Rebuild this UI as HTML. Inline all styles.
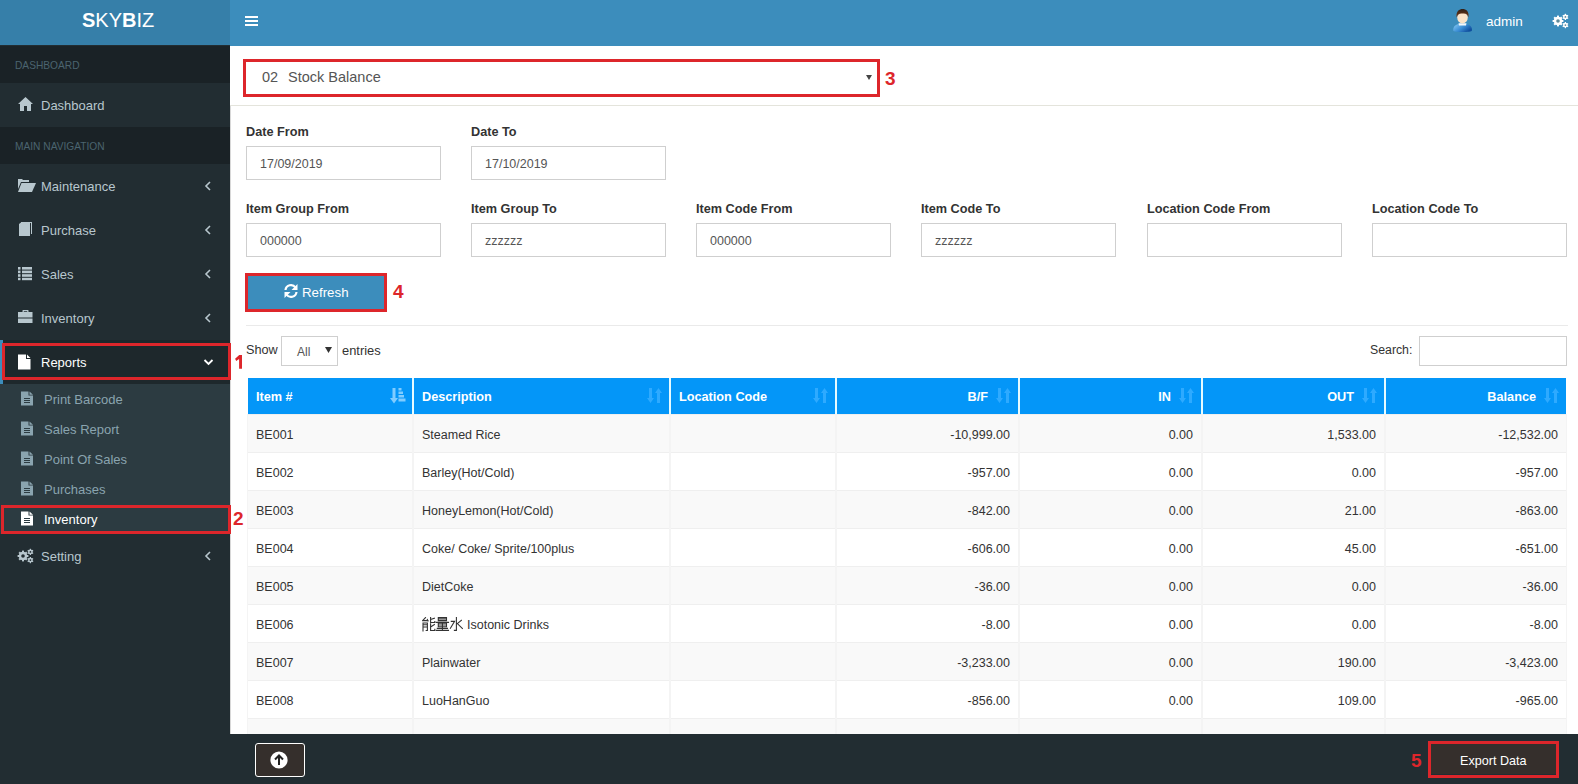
<!DOCTYPE html>
<html><head><meta charset="utf-8"><style>
*{box-sizing:border-box;margin:0;padding:0}
html,body{width:1578px;height:784px;overflow:hidden;background:#fff;font-family:"Liberation Sans",sans-serif;}
div,span,svg{position:absolute}
.t{white-space:nowrap}
.red{border:3px solid #dd262b}
.num{color:#dd262b;font-weight:bold;font-size:19px;line-height:19px}
.lbl{font-size:12.7px;font-weight:bold;color:#333;line-height:15px;margin-top:1px}
.inp{width:195px;height:34px;border:1px solid #cfcfcf;background:#fff}
.inp span{left:13px;top:10px;font-size:12.5px;color:#555;line-height:15px}
.mt{left:41px;font-size:13px;color:#b8c7ce;line-height:15px;margin-top:1px}
.st{left:44px;font-size:13px;color:#8aa4af;line-height:15px}
.cell{font-size:12.5px;color:#333;line-height:15px}
.th{font-size:12.7px;color:#fff;font-weight:bold;line-height:15px}
</style></head><body>
<div style="left:0;top:0;width:230px;height:46px;background:#367fa9"></div>
<div class="t" style="left:82px;top:9px;font-size:20px;color:#fff;line-height:23px;letter-spacing:0px"><b>S</b>KY<b>B</b>IZ</div>
<div style="left:230px;top:0;width:1348px;height:46px;background:#3c8dbc"></div>
<div style="left:245px;top:16px;width:13px;height:2px;background:#fff"></div>
<div style="left:245px;top:20px;width:13px;height:2px;background:#fff"></div>
<div style="left:245px;top:24px;width:13px;height:2px;background:#fff"></div>
<svg style="left:1452px;top:8px" width="21" height="25" viewBox="0 0 21 25">
<defs><linearGradient id="bd" x1="0" y1="0" x2="1" y2="0.6"><stop offset="0" stop-color="#8fd0f5"/><stop offset="0.55" stop-color="#3d8fd6"/><stop offset="1" stop-color="#0f4f9e"/></linearGradient>
<linearGradient id="hr" x1="0" y1="0" x2="0" y2="1"><stop offset="0" stop-color="#2e2018"/><stop offset="1" stop-color="#7a3a14"/></linearGradient></defs>
<path d="M1.2 22.5 C1.2 17.5 4.5 15.5 10.5 15.5 C16.5 15.5 20 17.5 20 22.5 C20 24.5 1.2 24.5 1.2 22.5Z" fill="url(#bd)"/>
<path d="M6.5 15.3 L14.5 15.3 L14 17.6 L7 17.6Z" fill="#f4f8fb"/>
<ellipse cx="10.5" cy="9.6" rx="5.3" ry="5.9" fill="#fbe3c8"/>
<path d="M4.6 9.5 C3.8 3 7.5 1 10.5 1 C14 1 17.3 3 16.5 9.5 C15.8 6.5 14 5.2 10.5 5.6 C7.5 5.2 5.5 6.5 4.6 9.5Z" fill="url(#hr)"/>
</svg>
<div class="t" style="left:1486px;top:14px;font-size:13.5px;color:#fff;line-height:16px">admin</div>
<svg style="left:1552px;top:13px" width="17" height="16" viewBox="0 0 17 16"><circle cx="6" cy="8" r="4.2" fill="#fff"/><rect x="5.00" y="2.60" width="2.0" height="5.4" fill="#fff" transform="rotate(0.0 6 8)"/><rect x="5.00" y="2.60" width="2.0" height="5.4" fill="#fff" transform="rotate(45.0 6 8)"/><rect x="5.00" y="2.60" width="2.0" height="5.4" fill="#fff" transform="rotate(90.0 6 8)"/><rect x="5.00" y="2.60" width="2.0" height="5.4" fill="#fff" transform="rotate(135.0 6 8)"/><rect x="5.00" y="2.60" width="2.0" height="5.4" fill="#fff" transform="rotate(180.0 6 8)"/><rect x="5.00" y="2.60" width="2.0" height="5.4" fill="#fff" transform="rotate(225.0 6 8)"/><rect x="5.00" y="2.60" width="2.0" height="5.4" fill="#fff" transform="rotate(270.0 6 8)"/><rect x="5.00" y="2.60" width="2.0" height="5.4" fill="#fff" transform="rotate(315.0 6 8)"/><circle cx="6" cy="8" r="1.8" fill="#5f8a99"/><circle cx="13.4" cy="3.9" r="2.3" fill="#fff"/><rect x="12.75" y="0.80" width="1.3" height="3.1" fill="#fff" transform="rotate(0.0 13.4 3.9)"/><rect x="12.75" y="0.80" width="1.3" height="3.1" fill="#fff" transform="rotate(60.0 13.4 3.9)"/><rect x="12.75" y="0.80" width="1.3" height="3.1" fill="#fff" transform="rotate(120.0 13.4 3.9)"/><rect x="12.75" y="0.80" width="1.3" height="3.1" fill="#fff" transform="rotate(180.0 13.4 3.9)"/><rect x="12.75" y="0.80" width="1.3" height="3.1" fill="#fff" transform="rotate(240.0 13.4 3.9)"/><rect x="12.75" y="0.80" width="1.3" height="3.1" fill="#fff" transform="rotate(300.0 13.4 3.9)"/><circle cx="13.4" cy="3.9" r="0.9" fill="#5f8a99"/><circle cx="13.4" cy="12.1" r="2.3" fill="#fff"/><rect x="12.75" y="9.00" width="1.3" height="3.1" fill="#fff" transform="rotate(0.0 13.4 12.1)"/><rect x="12.75" y="9.00" width="1.3" height="3.1" fill="#fff" transform="rotate(60.0 13.4 12.1)"/><rect x="12.75" y="9.00" width="1.3" height="3.1" fill="#fff" transform="rotate(120.0 13.4 12.1)"/><rect x="12.75" y="9.00" width="1.3" height="3.1" fill="#fff" transform="rotate(180.0 13.4 12.1)"/><rect x="12.75" y="9.00" width="1.3" height="3.1" fill="#fff" transform="rotate(240.0 13.4 12.1)"/><rect x="12.75" y="9.00" width="1.3" height="3.1" fill="#fff" transform="rotate(300.0 13.4 12.1)"/><circle cx="13.4" cy="12.1" r="0.9" fill="#5f8a99"/></svg>
<div style="left:0;top:45px;width:230px;height:739px;background:#222d32"></div>
<div style="left:0;top:46px;width:230px;height:37px;background:#1a2226"></div>
<div class="t" style="left:15px;top:60px;font-size:10.2px;color:#4b646f;line-height:12px">DASHBOARD</div>
<div style="left:0;top:127px;width:230px;height:37px;background:#1a2226"></div>
<div class="t" style="left:15px;top:141px;font-size:10.2px;color:#4b646f;line-height:12px">MAIN NAVIGATION</div>
<div class="t mt" style="top:97px">Dashboard</div>
<div class="t mt" style="top:178px">Maintenance</div>
<svg style="left:204px;top:181px" width="8" height="10" viewBox="0 0 8 10"><path d="M6 1 L2 5 L6 9" stroke="#b8c7ce" stroke-width="1.6" fill="none"/></svg>
<div class="t mt" style="top:222px">Purchase</div>
<svg style="left:204px;top:225px" width="8" height="10" viewBox="0 0 8 10"><path d="M6 1 L2 5 L6 9" stroke="#b8c7ce" stroke-width="1.6" fill="none"/></svg>
<div class="t mt" style="top:266px">Sales</div>
<svg style="left:204px;top:269px" width="8" height="10" viewBox="0 0 8 10"><path d="M6 1 L2 5 L6 9" stroke="#b8c7ce" stroke-width="1.6" fill="none"/></svg>
<div class="t mt" style="top:310px">Inventory</div>
<svg style="left:204px;top:313px" width="8" height="10" viewBox="0 0 8 10"><path d="M6 1 L2 5 L6 9" stroke="#b8c7ce" stroke-width="1.6" fill="none"/></svg>
<svg style="left:18px;top:96px" width="16" height="16" viewBox="0 0 16 16"><path d="M7.5 1 L15 8 L13 8 L13 15 L9 15 L9 10 L6 10 L6 15 L2 15 L2 8 L0 8 Z" fill="#b8c7ce"/></svg>
<svg style="left:17px;top:178px" width="20" height="15" viewBox="0 0 20 15"><path d="M1 2 L1 1 L5 1 L6 2 L12 2 L12 4 L4 4 L1 11 Z" fill="#b8c7ce"/><path d="M4.5 5 L19 5 L15 14 L1 14 Z" fill="#b8c7ce"/></svg>
<svg style="left:18px;top:221px" width="16" height="16" viewBox="0 0 16 16"><path d="M3 1 L14 1 L14 13 L13 13 L13 2 L3 2 Z" fill="#b8c7ce"/><path d="M1 3 L3 1.5 L12 1.5 L12 15 L1 15 Z" fill="#b8c7ce"/></svg>
<svg style="left:18px;top:266px" width="15" height="15" viewBox="0 0 15 15"><g fill="#b8c7ce"><rect x="0" y="1" width="2.5" height="2.6"/><rect x="4" y="1" width="10" height="2.6"/><rect x="0" y="4.6" width="2.5" height="2.6"/><rect x="4" y="4.6" width="10" height="2.6"/><rect x="0" y="8.2" width="2.5" height="2.6"/><rect x="4" y="8.2" width="10" height="2.6"/><rect x="0" y="11.8" width="2.5" height="2.4"/><rect x="4" y="11.8" width="10" height="2.4"/></g></svg>
<svg style="left:18px;top:309px" width="15" height="15" viewBox="0 0 15 15"><g fill="#b8c7ce"><path d="M4.5 3 L4.5 1.5 Q4.5 1 5 1 L10 1 Q10.5 1 10.5 1.5 L10.5 3 L9.2 3 L9.2 2.2 L5.8 2.2 L5.8 3Z"/><rect x="0" y="3" width="14.5" height="5.5"/><rect x="0" y="9.5" width="14.5" height="4.5"/></g></svg>
<div style="left:0;top:340px;width:230px;height:44px;background:#1e282c"></div>
<div style="left:0;top:340px;width:3px;height:44px;background:#3c8dbc"></div>
<div class="t mt" style="top:354px;color:#fff">Reports</div>
<svg style="left:18px;top:354px" width="13" height="16" viewBox="0 0 13 16"><path d="M0 0.5 L8 0.5 L8 5 L12.5 5 L12.5 15.5 L0 15.5Z M9 0.5 L12.5 4 L9 4Z" fill="#fff"/></svg>
<svg style="left:203px;top:358px" width="11" height="8" viewBox="0 0 11 8"><path d="M1.5 2 L5.5 6 L9.5 2" stroke="#fff" stroke-width="1.8" fill="none"/></svg>
<div style="left:0;top:384px;width:230px;height:150px;background:#2c3b41"></div>
<div class="t st" style="top:392px;color:#8aa4af">Print Barcode</div>
<svg style="left:21px;top:391px" width="13" height="15" viewBox="0 0 13 15"><path fill-rule="evenodd" d="M0 0.5 L7.5 0.5 L7.5 4.5 L12 4.5 L12 14.5 L0 14.5Z M8.5 0.5 L12 3.8 L8.5 3.8Z M3 7 L9 7 L9 8 L3 8Z M3 9 L9 9 L9 10 L3 10Z M3 11 L9 11 L9 12 L3 12Z" fill="#8aa4af"/></svg>
<div class="t st" style="top:422px;color:#8aa4af">Sales Report</div>
<svg style="left:21px;top:421px" width="13" height="15" viewBox="0 0 13 15"><path fill-rule="evenodd" d="M0 0.5 L7.5 0.5 L7.5 4.5 L12 4.5 L12 14.5 L0 14.5Z M8.5 0.5 L12 3.8 L8.5 3.8Z M3 7 L9 7 L9 8 L3 8Z M3 9 L9 9 L9 10 L3 10Z M3 11 L9 11 L9 12 L3 12Z" fill="#8aa4af"/></svg>
<div class="t st" style="top:452px;color:#8aa4af">Point Of Sales</div>
<svg style="left:21px;top:451px" width="13" height="15" viewBox="0 0 13 15"><path fill-rule="evenodd" d="M0 0.5 L7.5 0.5 L7.5 4.5 L12 4.5 L12 14.5 L0 14.5Z M8.5 0.5 L12 3.8 L8.5 3.8Z M3 7 L9 7 L9 8 L3 8Z M3 9 L9 9 L9 10 L3 10Z M3 11 L9 11 L9 12 L3 12Z" fill="#8aa4af"/></svg>
<div class="t st" style="top:482px;color:#8aa4af">Purchases</div>
<svg style="left:21px;top:481px" width="13" height="15" viewBox="0 0 13 15"><path fill-rule="evenodd" d="M0 0.5 L7.5 0.5 L7.5 4.5 L12 4.5 L12 14.5 L0 14.5Z M8.5 0.5 L12 3.8 L8.5 3.8Z M3 7 L9 7 L9 8 L3 8Z M3 9 L9 9 L9 10 L3 10Z M3 11 L9 11 L9 12 L3 12Z" fill="#8aa4af"/></svg>
<div class="t st" style="top:512px;color:#fff">Inventory</div>
<svg style="left:21px;top:511px" width="13" height="15" viewBox="0 0 13 15"><path fill-rule="evenodd" d="M0 0.5 L7.5 0.5 L7.5 4.5 L12 4.5 L12 14.5 L0 14.5Z M8.5 0.5 L12 3.8 L8.5 3.8Z M3 7 L9 7 L9 8 L3 8Z M3 9 L9 9 L9 10 L3 10Z M3 11 L9 11 L9 12 L3 12Z" fill="#fff"/></svg>
<div class="t mt" style="top:548px">Setting</div>
<svg style="left:204px;top:551px" width="8" height="10" viewBox="0 0 8 10"><path d="M6 1 L2 5 L6 9" stroke="#b8c7ce" stroke-width="1.6" fill="none"/></svg>
<svg style="left:17px;top:548px" width="17" height="16" viewBox="0 0 17 16"><circle cx="6" cy="8" r="4.2" fill="#b8c7ce"/><rect x="5.00" y="2.60" width="2.0" height="5.4" fill="#b8c7ce" transform="rotate(0.0 6 8)"/><rect x="5.00" y="2.60" width="2.0" height="5.4" fill="#b8c7ce" transform="rotate(45.0 6 8)"/><rect x="5.00" y="2.60" width="2.0" height="5.4" fill="#b8c7ce" transform="rotate(90.0 6 8)"/><rect x="5.00" y="2.60" width="2.0" height="5.4" fill="#b8c7ce" transform="rotate(135.0 6 8)"/><rect x="5.00" y="2.60" width="2.0" height="5.4" fill="#b8c7ce" transform="rotate(180.0 6 8)"/><rect x="5.00" y="2.60" width="2.0" height="5.4" fill="#b8c7ce" transform="rotate(225.0 6 8)"/><rect x="5.00" y="2.60" width="2.0" height="5.4" fill="#b8c7ce" transform="rotate(270.0 6 8)"/><rect x="5.00" y="2.60" width="2.0" height="5.4" fill="#b8c7ce" transform="rotate(315.0 6 8)"/><circle cx="6" cy="8" r="1.8" fill="#222d32"/><circle cx="13.4" cy="3.9" r="2.3" fill="#b8c7ce"/><rect x="12.75" y="0.80" width="1.3" height="3.1" fill="#b8c7ce" transform="rotate(0.0 13.4 3.9)"/><rect x="12.75" y="0.80" width="1.3" height="3.1" fill="#b8c7ce" transform="rotate(60.0 13.4 3.9)"/><rect x="12.75" y="0.80" width="1.3" height="3.1" fill="#b8c7ce" transform="rotate(120.0 13.4 3.9)"/><rect x="12.75" y="0.80" width="1.3" height="3.1" fill="#b8c7ce" transform="rotate(180.0 13.4 3.9)"/><rect x="12.75" y="0.80" width="1.3" height="3.1" fill="#b8c7ce" transform="rotate(240.0 13.4 3.9)"/><rect x="12.75" y="0.80" width="1.3" height="3.1" fill="#b8c7ce" transform="rotate(300.0 13.4 3.9)"/><circle cx="13.4" cy="3.9" r="0.9" fill="#222d32"/><circle cx="13.4" cy="12.1" r="2.3" fill="#b8c7ce"/><rect x="12.75" y="9.00" width="1.3" height="3.1" fill="#b8c7ce" transform="rotate(0.0 13.4 12.1)"/><rect x="12.75" y="9.00" width="1.3" height="3.1" fill="#b8c7ce" transform="rotate(60.0 13.4 12.1)"/><rect x="12.75" y="9.00" width="1.3" height="3.1" fill="#b8c7ce" transform="rotate(120.0 13.4 12.1)"/><rect x="12.75" y="9.00" width="1.3" height="3.1" fill="#b8c7ce" transform="rotate(180.0 13.4 12.1)"/><rect x="12.75" y="9.00" width="1.3" height="3.1" fill="#b8c7ce" transform="rotate(240.0 13.4 12.1)"/><rect x="12.75" y="9.00" width="1.3" height="3.1" fill="#b8c7ce" transform="rotate(300.0 13.4 12.1)"/><circle cx="13.4" cy="12.1" r="0.9" fill="#222d32"/></svg>
<div style="left:230px;top:105px;width:1348px;height:1px;background:#e4e4dc"></div>
<div style="left:230px;top:106px;width:1px;height:628px;background:#d8d8d8"></div>
<div class="t" style="left:262px;top:69px;font-size:14.5px;color:#555;line-height:17px">02</div>
<div class="t" style="left:288px;top:69px;font-size:14.5px;color:#555;line-height:17px">Stock Balance</div>
<svg style="left:866px;top:75px" width="6" height="5" viewBox="0 0 6 5"><path d="M0 0 L6 0 L3 5Z" fill="#444"/></svg>
<div class="t lbl" style="left:246px;top:124px">Date From</div>
<div class="t lbl" style="left:471px;top:124px">Date To</div>
<div class="inp" style="left:246px;top:146px"><span class="t">17/09/2019</span></div>
<div class="inp" style="left:471px;top:146px"><span class="t">17/10/2019</span></div>
<div class="t lbl" style="left:246px;top:201px">Item Group From</div>
<div class="inp" style="left:246px;top:223px"><span class="t">000000</span></div>
<div class="t lbl" style="left:471px;top:201px">Item Group To</div>
<div class="inp" style="left:471px;top:223px"><span class="t">zzzzzz</span></div>
<div class="t lbl" style="left:696px;top:201px">Item Code From</div>
<div class="inp" style="left:696px;top:223px"><span class="t">000000</span></div>
<div class="t lbl" style="left:921px;top:201px">Item Code To</div>
<div class="inp" style="left:921px;top:223px"><span class="t">zzzzzz</span></div>
<div class="t lbl" style="left:1147px;top:201px">Location Code From</div>
<div class="inp" style="left:1147px;top:223px"><span class="t"></span></div>
<div class="t lbl" style="left:1372px;top:201px">Location Code To</div>
<div class="inp" style="left:1372px;top:223px"><span class="t"></span></div>
<div style="left:248px;top:276px;width:136px;height:33px;background:#3c8dbc"></div>
<svg style="left:283px;top:283px" width="16" height="16" viewBox="0 0 16 16"><g fill="none" stroke="#fff" stroke-width="2.2"><path d="M2.5 7 A5.5 5.5 0 0 1 12.5 4.5"/><path d="M13.5 9 A5.5 5.5 0 0 1 3.5 11.5"/></g><path d="M14.5 1 L14.5 7 L8.5 7Z" fill="#fff"/><path d="M1.5 15 L1.5 9 L7.5 9Z" fill="#fff"/></svg>
<div class="t" style="left:302px;top:285px;font-size:13.3px;color:#fff;line-height:16px">Refresh</div>
<div style="left:246px;top:325px;width:1322px;height:1px;background:#eaeaea"></div>
<div class="t" style="left:246px;top:343px;font-size:12.7px;color:#333;line-height:15px">Show</div>
<div style="left:281px;top:336px;width:57px;height:30px;border:1px solid #cfcfcf"></div>
<div class="t" style="left:297px;top:345px;font-size:12px;color:#555;line-height:15px">All</div>
<svg style="left:325px;top:347px" width="7" height="6" viewBox="0 0 7 6"><path d="M0 0 L7 0 L3.5 6Z" fill="#333"/></svg>
<div class="t" style="left:342px;top:343px;font-size:12.9px;color:#333;line-height:15px">entries</div>
<div class="t" style="left:1370px;top:343px;font-size:12.3px;color:#333;line-height:15px">Search:</div>
<div style="left:1419px;top:336px;width:148px;height:30px;border:1px solid #cfcfcf"></div>
<div style="left:248px;top:378px;width:164px;height:36px;background:#0496f8"></div>
<div class="t th" style="left:256px;top:390px">Item #</div>
<svg style="left:390px;top:388px" width="16" height="16" viewBox="0 0 16 16"><g fill="#80ccff"><path d="M2.5 0 L5.5 0 L5.5 10 L8 10 L4 15.5 L0 10 L2.5 10Z"/><rect x="8.5" y="0" width="3" height="2.5"/><rect x="8.5" y="3.5" width="4.5" height="2.5"/><rect x="8.5" y="7" width="5.5" height="2.5"/><rect x="8.5" y="10.5" width="7" height="3"/></g></svg>
<div style="left:414px;top:378px;width:255px;height:36px;background:#0496f8"></div>
<div class="t th" style="left:422px;top:390px">Description</div>
<svg style="left:647px;top:388px" width="16" height="16" viewBox="0 0 16 16"><g fill="#2eaaff"><path d="M2 0 L5 0 L5 10 L7 10 L3.5 15 L0 10 L2 10Z"/><path d="M10 15 L13 15 L13 5 L15 5 L11.5 0 L8 5 L10 5Z"/></g></svg>
<div style="left:412px;top:378px;width:2px;height:36px;background:#e6fbff"></div>
<div style="left:671px;top:378px;width:164px;height:36px;background:#0496f8"></div>
<div class="t th" style="left:679px;top:390px">Location Code</div>
<svg style="left:813px;top:388px" width="16" height="16" viewBox="0 0 16 16"><g fill="#2eaaff"><path d="M2 0 L5 0 L5 10 L7 10 L3.5 15 L0 10 L2 10Z"/><path d="M10 15 L13 15 L13 5 L15 5 L11.5 0 L8 5 L10 5Z"/></g></svg>
<div style="left:669px;top:378px;width:2px;height:36px;background:#e6fbff"></div>
<div style="left:837px;top:378px;width:181px;height:36px;background:#0496f8"></div>
<div class="t th" style="right:590px;top:390px">B/F</div>
<svg style="left:996px;top:388px" width="16" height="16" viewBox="0 0 16 16"><g fill="#2eaaff"><path d="M2 0 L5 0 L5 10 L7 10 L3.5 15 L0 10 L2 10Z"/><path d="M10 15 L13 15 L13 5 L15 5 L11.5 0 L8 5 L10 5Z"/></g></svg>
<div style="left:835px;top:378px;width:2px;height:36px;background:#e6fbff"></div>
<div style="left:1020px;top:378px;width:181px;height:36px;background:#0496f8"></div>
<div class="t th" style="right:407px;top:390px">IN</div>
<svg style="left:1179px;top:388px" width="16" height="16" viewBox="0 0 16 16"><g fill="#2eaaff"><path d="M2 0 L5 0 L5 10 L7 10 L3.5 15 L0 10 L2 10Z"/><path d="M10 15 L13 15 L13 5 L15 5 L11.5 0 L8 5 L10 5Z"/></g></svg>
<div style="left:1018px;top:378px;width:2px;height:36px;background:#e6fbff"></div>
<div style="left:1203px;top:378px;width:181px;height:36px;background:#0496f8"></div>
<div class="t th" style="right:224px;top:390px">OUT</div>
<svg style="left:1362px;top:388px" width="16" height="16" viewBox="0 0 16 16"><g fill="#2eaaff"><path d="M2 0 L5 0 L5 10 L7 10 L3.5 15 L0 10 L2 10Z"/><path d="M10 15 L13 15 L13 5 L15 5 L11.5 0 L8 5 L10 5Z"/></g></svg>
<div style="left:1201px;top:378px;width:2px;height:36px;background:#e6fbff"></div>
<div style="left:1386px;top:378px;width:180px;height:36px;background:#0496f8"></div>
<div class="t th" style="right:42px;top:390px">Balance</div>
<svg style="left:1544px;top:388px" width="16" height="16" viewBox="0 0 16 16"><g fill="#2eaaff"><path d="M2 0 L5 0 L5 10 L7 10 L3.5 15 L0 10 L2 10Z"/><path d="M10 15 L13 15 L13 5 L15 5 L11.5 0 L8 5 L10 5Z"/></g></svg>
<div style="left:1384px;top:378px;width:2px;height:36px;background:#e6fbff"></div>
<div style="left:248px;top:414px;width:1318px;height:38px;background:#f9f9f9;border-top:1px solid #efefef"></div>
<div class="t cell" style="left:256px;top:428px">BE001</div>
<div class="t cell" style="left:422px;top:428px">Steamed Rice</div>
<div class="t cell" style="right:568px;top:428px">-10,999.00</div>
<div class="t cell" style="right:385px;top:428px">0.00</div>
<div class="t cell" style="right:202px;top:428px">1,533.00</div>
<div class="t cell" style="right:20px;top:428px">-12,532.00</div>
<div style="left:248px;top:452px;width:1318px;height:38px;background:#fff;border-top:1px solid #efefef"></div>
<div class="t cell" style="left:256px;top:466px">BE002</div>
<div class="t cell" style="left:422px;top:466px">Barley(Hot/Cold)</div>
<div class="t cell" style="right:568px;top:466px">-957.00</div>
<div class="t cell" style="right:385px;top:466px">0.00</div>
<div class="t cell" style="right:202px;top:466px">0.00</div>
<div class="t cell" style="right:20px;top:466px">-957.00</div>
<div style="left:248px;top:490px;width:1318px;height:38px;background:#f9f9f9;border-top:1px solid #efefef"></div>
<div class="t cell" style="left:256px;top:504px">BE003</div>
<div class="t cell" style="left:422px;top:504px">HoneyLemon(Hot/Cold)</div>
<div class="t cell" style="right:568px;top:504px">-842.00</div>
<div class="t cell" style="right:385px;top:504px">0.00</div>
<div class="t cell" style="right:202px;top:504px">21.00</div>
<div class="t cell" style="right:20px;top:504px">-863.00</div>
<div style="left:248px;top:528px;width:1318px;height:38px;background:#fff;border-top:1px solid #efefef"></div>
<div class="t cell" style="left:256px;top:542px">BE004</div>
<div class="t cell" style="left:422px;top:542px">Coke/ Coke/ Sprite/100plus</div>
<div class="t cell" style="right:568px;top:542px">-606.00</div>
<div class="t cell" style="right:385px;top:542px">0.00</div>
<div class="t cell" style="right:202px;top:542px">45.00</div>
<div class="t cell" style="right:20px;top:542px">-651.00</div>
<div style="left:248px;top:566px;width:1318px;height:38px;background:#f9f9f9;border-top:1px solid #efefef"></div>
<div class="t cell" style="left:256px;top:580px">BE005</div>
<div class="t cell" style="left:422px;top:580px">DietCoke</div>
<div class="t cell" style="right:568px;top:580px">-36.00</div>
<div class="t cell" style="right:385px;top:580px">0.00</div>
<div class="t cell" style="right:202px;top:580px">0.00</div>
<div class="t cell" style="right:20px;top:580px">-36.00</div>
<div style="left:248px;top:604px;width:1318px;height:38px;background:#fff;border-top:1px solid #efefef"></div>
<div class="t cell" style="left:256px;top:618px">BE006</div>
<svg style="left:422px;top:617px" width="42" height="15" viewBox="0 0 42 15"><g fill="none" stroke="#333" stroke-width="1.1" stroke-linecap="square"><path d="M3.5 0.6 L0.6 3.6 L6 3.6 M5.3 2.4 L6 4 M1 14 L1 6 L5.4 6 L5.4 13.5 L4.2 13.5 M1 7.8 L5.4 7.8 M1 10 L5.4 10 M8.6 0.6 L8.6 5.5 L12.8 5.5 L12.8 4.5 M12.4 1.3 L8.6 2.6 M8.6 6.8 L8.6 13.5 L12.8 13.5 L12.8 12.2 M12.4 7.6 L8.6 10 M16.3 0.6 L24.5 0.6 L24.5 3.6 L16.3 3.6 Z M16.3 2 L24.5 2 M14.3 5.4 L26.5 5.4 M16.3 6.2 L24.5 6.2 L24.5 9.8 L16.3 9.8 Z M16.3 8 L24.5 8 M20.4 6.2 L20.4 13.4 M15.3 11.4 L25.5 11.4 M14.3 13.4 L26.5 13.4 M34.4 0.6 L34.4 13.4 L32.4 13.4 M29.3 4.4 L32.6 4.4 L28.4 11.3 M39.4 3.3 L35.3 6.6 M35.6 6.8 L40.4 11.4"/></g></svg>
<div class="t cell" style="left:467px;top:618px">Isotonic Drinks</div>
<div class="t cell" style="right:568px;top:618px">-8.00</div>
<div class="t cell" style="right:385px;top:618px">0.00</div>
<div class="t cell" style="right:202px;top:618px">0.00</div>
<div class="t cell" style="right:20px;top:618px">-8.00</div>
<div style="left:248px;top:642px;width:1318px;height:38px;background:#f9f9f9;border-top:1px solid #efefef"></div>
<div class="t cell" style="left:256px;top:656px">BE007</div>
<div class="t cell" style="left:422px;top:656px">Plainwater</div>
<div class="t cell" style="right:568px;top:656px">-3,233.00</div>
<div class="t cell" style="right:385px;top:656px">0.00</div>
<div class="t cell" style="right:202px;top:656px">190.00</div>
<div class="t cell" style="right:20px;top:656px">-3,423.00</div>
<div style="left:248px;top:680px;width:1318px;height:38px;background:#fff;border-top:1px solid #efefef"></div>
<div class="t cell" style="left:256px;top:694px">BE008</div>
<div class="t cell" style="left:422px;top:694px">LuoHanGuo</div>
<div class="t cell" style="right:568px;top:694px">-856.00</div>
<div class="t cell" style="right:385px;top:694px">0.00</div>
<div class="t cell" style="right:202px;top:694px">109.00</div>
<div class="t cell" style="right:20px;top:694px">-965.00</div>
<div style="left:248px;top:718px;width:1318px;height:38px;background:#f9f9f9;border-top:1px solid #efefef"></div>
<div style="left:412px;top:414px;width:2px;height:320px;background:#f4f4f4"></div>
<div style="left:669px;top:414px;width:2px;height:320px;background:#f4f4f4"></div>
<div style="left:835px;top:414px;width:2px;height:320px;background:#f4f4f4"></div>
<div style="left:1018px;top:414px;width:2px;height:320px;background:#f4f4f4"></div>
<div style="left:1201px;top:414px;width:2px;height:320px;background:#f4f4f4"></div>
<div style="left:1384px;top:414px;width:2px;height:320px;background:#f4f4f4"></div>
<div style="left:247px;top:414px;width:1px;height:320px;background:#f4f4f4"></div>
<div style="left:1566px;top:414px;width:1px;height:320px;background:#f4f4f4"></div>
<div style="left:230px;top:734px;width:1348px;height:50px;background:#222d32"></div>
<div style="left:255px;top:743px;width:50px;height:34px;background:#352f2c;border:1px solid #fff;border-radius:3px"></div>
<svg style="left:270px;top:751px" width="18" height="18" viewBox="0 0 18 18"><circle cx="9" cy="9" r="8.6" fill="#fff"/><path d="M9 14 L9 5 M5 8.5 L9 4.5 L13 8.5" stroke="#222" stroke-width="2" fill="none"/></svg>
<div style="left:1431px;top:744px;width:125px;height:30px;background:#352f2c"></div>
<div class="t" style="left:1460px;top:754px;font-size:12.6px;color:#fff;line-height:15px">Export Data</div>
<div class="red" style="left:2px;top:343px;width:229px;height:37px"></div>
<svg style="left:235px;top:355px" width="8" height="14" viewBox="0 0 8 14"><path d="M4.2 0.1 L7 0.1 L7 13.8 L4.1 13.8 L4.1 4 L1.2 5.9 L0.1 3.8 Z" fill="#dd262b"/></svg>
<div class="red" style="left:1px;top:505px;width:230px;height:29px"></div>
<div class="t num" style="left:233px;top:509px">2</div>
<div class="red" style="left:243px;top:59px;width:637px;height:38px"></div>
<div class="t num" style="left:885px;top:69px">3</div>
<div class="red" style="left:245px;top:273px;width:142px;height:39px"></div>
<div class="t num" style="left:393px;top:282px">4</div>
<div class="red" style="left:1428px;top:741px;width:131px;height:37px"></div>
<div class="t num" style="left:1411px;top:751px">5</div>
</body></html>
